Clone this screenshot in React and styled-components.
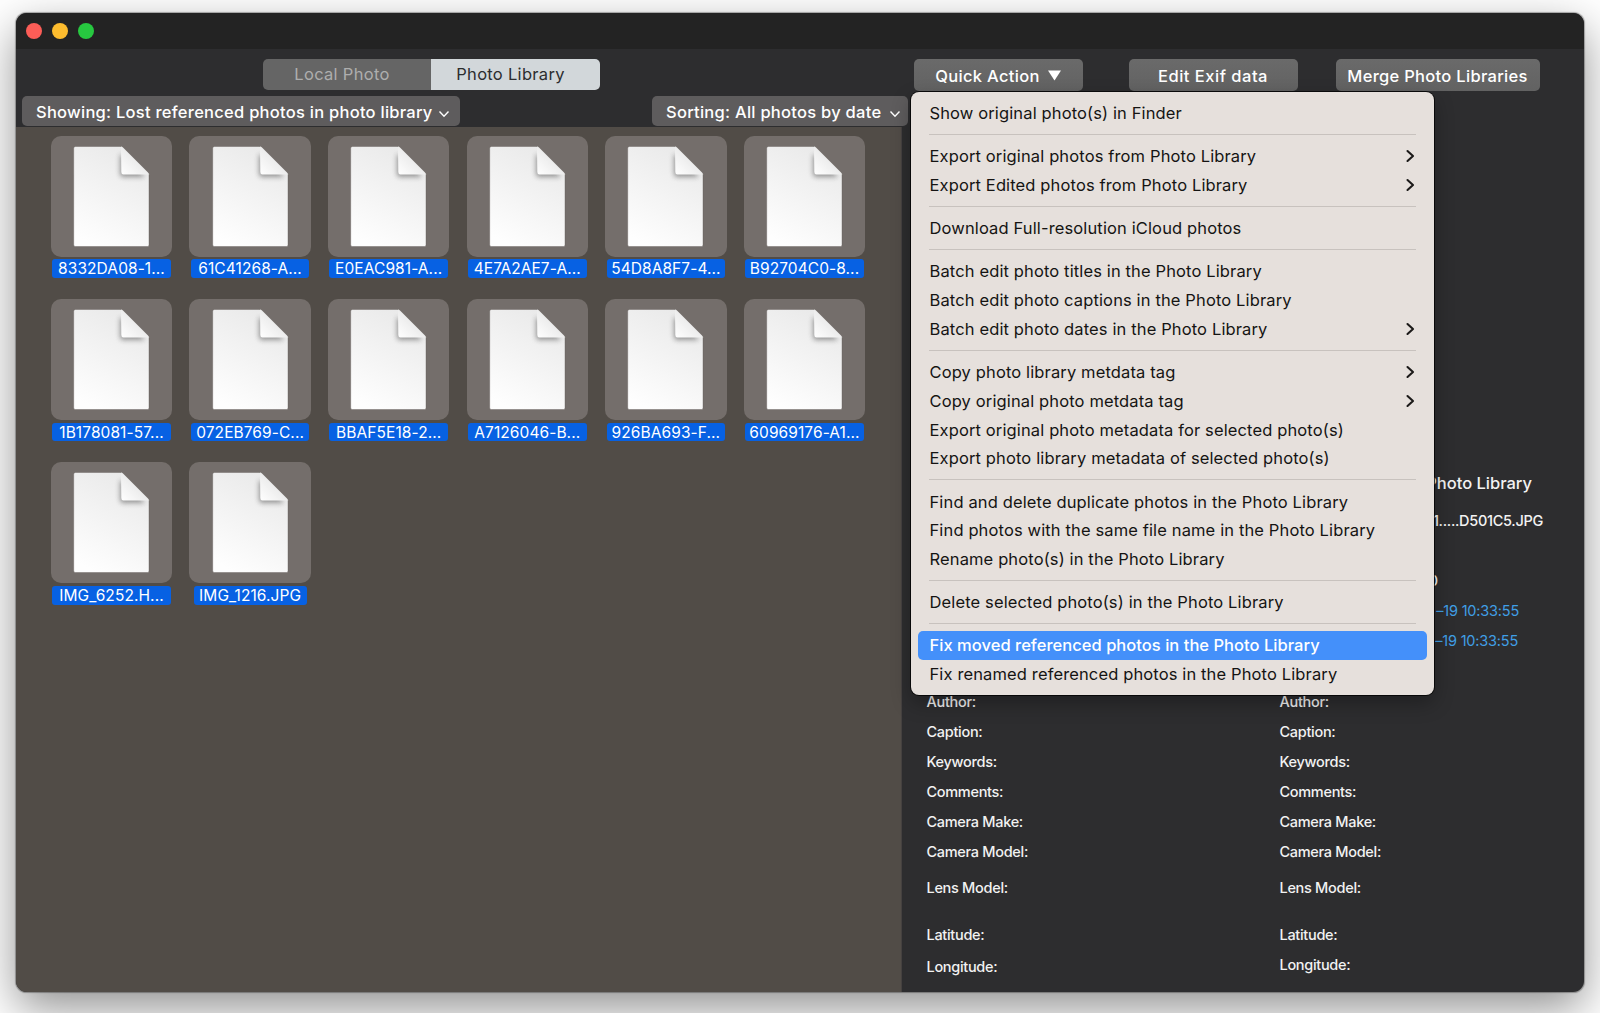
import React from "react"
import styled, { createGlobalStyle } from "styled-components"

const GlobalStyle = createGlobalStyle`
  * {
    box-sizing: border-box;
  }

  body {
    margin: 0;
    background: #fff;
    font-family: Inter, "Liberation Sans", sans-serif;
    overflow: hidden;
  }
`

const Desktop = styled.main`
  width: 1600px;
  height: 1013px;
  padding: 13px 16px 21px;
  overflow: hidden;
`

const Window = styled.section`
  position: relative;
  height: 979px;
  display: flex;
  flex-direction: column;
  border-radius: 11px;
  background: #2d2d2f;
  box-shadow: 0 0 1px 0.5px rgba(0, 0, 0, 0.3), 0 16px 46px rgba(0, 0, 0, 0.44);
`

const TitleBar = styled.header`
  height: 36px;
  padding: 0 10px;
  display: flex;
  align-items: center;
  gap: 10px;
  border-radius: 11px 11px 0 0;
  background: #232323;
`

const Light = styled.span`
  width: 16px;
  height: 16px;
  border-radius: 50%;
  background: ${({ color }) => color};
`

const Toolbar = styled.div`
  height: 78px;
  padding-top: 10px;
`

const ActionRow = styled.div`
  display: flex;
  height: 37px;
  padding-left: 247px;
`

const Segment = styled.button`
  width: ${({ $active }) => ($active ? 169 : 168)}px;
  height: 31px;
  padding: 0 10px 1px 0;
  border: 0;
  font-family: inherit;
  font-size: 16.5px;
  letter-spacing: 0.3px;
  color: ${({ $active }) => ($active ? "#2c2d2f" : "#aeaeae")};
  background: ${({ $active }) => ($active ? "#d2d7da" : "#656565")};
  border-radius: ${({ $active }) => ($active ? "0 5px 5px 0" : "5px 0 0 5px")};
`

const Actions = styled.div`
  display: flex;
  margin-left: 314px;
`

const ActionButton = styled.button`
  display: flex;
  align-items: center;
  justify-content: center;
  gap: 8px;
  width: ${({ $width }) => $width}px;
  height: 32px;
  margin-right: ${({ $after }) => $after || 0}px;
  padding: 1px 1px 0 0;
  border: 0;
  border-radius: 5px;
  background: linear-gradient(#6a6a6a, #626262);
  font-family: inherit;
  font-size: 16.5px;
  font-weight: 500;
  letter-spacing: ${({ $tracking }) => $tracking || 0.3}px;
  color: #fff;
`

const FilterRow = styled.div`
  display: flex;
  padding-left: 6px;
  gap: 192px;
`

const Dropdown = styled.button`
  display: flex;
  align-items: center;
  justify-content: space-between;
  width: ${({ $width }) => $width}px;
  height: 30px;
  padding: 2px ${({ $end }) => $end || 10}px 0 14px;
  border: 0;
  border-radius: 5px;
  background: #5e5c5d;
  font-family: inherit;
  font-size: 16.5px;
  font-weight: 500;
  letter-spacing: 0.26px;
  color: #fff;
`

const Main = styled.div`
  flex: 1;
  display: flex;
`

const Photos = styled.div`
  width: 886px;
  padding: 8.5px 0 0 35px;
  display: grid;
  grid-template-columns: repeat(6, 121px);
  grid-auto-rows: 163.4px;
  column-gap: 17.6px;
  align-content: start;
  background: #514c47;
  border-right: 1px solid #454140;
  border-radius: 0 0 0 11px;
`

const Photo = styled.figure`
  margin: 0;
  display: flex;
  flex-direction: column;
  align-items: center;
`

const Thumb = styled.div`
  width: 121.5px;
  height: 121px;
  padding-top: 10px;
  display: flex;
  justify-content: center;
  border-radius: 10px;
  background: #746e6b;
`

const Name = styled.figcaption`
  height: 18.5px;
  margin-top: 2.8px;
  min-width: ${({ $short }) => ($short ? 113 : 118.5)}px;
  border-radius: 3px;
  background: #0761e3;
  font-size: 15.5px;
  line-height: 19px;
  letter-spacing: 0.08px;
  text-align: center;
  white-space: nowrap;
  color: #fff;
`

const Details = styled.div`
  flex: 1;
  display: grid;
  grid-template-columns: 353px 1fr;
  padding: 341px 0 0 24.5px;
`

const Column = styled.div`
  display: flex;
  flex-direction: column;
`

const Value = styled.div`
  height: 30px;
  line-height: 30px;
  margin-top: ${({ $gap }) => $gap || 0}px;
  padding-right: ${({ $inset }) => $inset}px;
  font-size: ${({ $size }) => $size || 14.5}px;
  font-weight: ${({ $link }) => ($link ? 400 : 500)};
  letter-spacing: ${({ $tracking }) => $tracking || 0}px;
  text-align: right;
  color: ${({ $link }) => ($link ? "#409fe6" : "#f2f2f2")};
`

const Fields = styled.div`
  margin-top: ${({ $top }) => $top}px;
`

const Label = styled.div`
  height: 30px;
  line-height: 30px;
  margin-top: ${({ $gap }) => $gap || 0}px;
  font-size: 14.5px;
  font-weight: 500;
  letter-spacing: -0.3px;
  color: #f2f2f2;
`

// floats over the toolbar's lower edge and the details panel
const Menu = styled.ul`
  position: absolute;
  top: 79px;
  left: 895px;
  width: 523px;
  height: 603px;
  margin: 0;
  padding: 6.5px 7px;
  list-style: none;
  border-radius: 8px;
  background: #e6e0dc;
  box-shadow: 0 0 0 1px rgba(0, 0, 0, 0.75), 0 8px 20px rgba(0, 0, 0, 0.3);
`

const MenuItem = styled.li`
  display: flex;
  align-items: center;
  justify-content: space-between;
  height: 28.8px;
  padding: 0.3px 12px 0 11.5px;
  border-radius: 5px;
  font-size: 16.5px;
  font-weight: ${({ $active }) => ($active ? 500 : 400)};
  letter-spacing: ${({ $active }) => ($active ? 0.03 : 0.13)}px;
  white-space: nowrap;
  color: ${({ $active }) => ($active ? "#fff" : "#151413")};
  background: ${({ $active }) => ($active ? "#4490fa" : "transparent")};
`

const Separator = styled.li`
  height: 14.35px;
  padding: 6.5px 11px 0;

  &::before {
    content: "";
    display: block;
    height: 1px;
    background: #c8c2be;
  }
`

const fileNames = [
  "8332DA08-1...",
  "61C41268-A...",
  "E0EAC981-A...",
  "4E7A2AE7-A...",
  "54D8A8F7-4...",
  "B92704C0-8...",
  "1B178081-57...",
  "072EB769-C...",
  "BBAF5E18-2...",
  "A7126046-B...",
  "926BA693-F...",
  "60969176-A1...",
  "IMG_6252.H...",
  "IMG_1216.JPG",
]

const menuGroups = [
  [{ text: "Show original photo(s) in Finder" }],
  [
    { text: "Export original photos from Photo Library", sub: true },
    { text: "Export Edited photos from Photo Library", sub: true },
  ],
  [{ text: "Download Full-resolution iCloud photos" }],
  [
    { text: "Batch edit photo titles in the Photo Library" },
    { text: "Batch edit photo captions in the Photo Library" },
    { text: "Batch edit photo dates in the Photo Library", sub: true },
  ],
  [
    { text: "Copy photo library metdata tag", sub: true },
    { text: "Copy original photo metdata tag", sub: true },
    { text: "Export original photo metadata for selected photo(s)" },
    { text: "Export photo library metadata of selected photo(s)" },
  ],
  [
    { text: "Find and delete duplicate photos in the Photo Library" },
    { text: "Find photos with the same file name in the Photo Library" },
    { text: "Rename photo(s) in the Photo Library" },
  ],
  [{ text: "Delete selected photo(s) in the Photo Library" }],
  [
    { text: "Fix moved referenced photos in the Photo Library", active: true },
    { text: "Fix renamed referenced photos in the Photo Library" },
  ],
]

const DocumentIcon = () => (
  <svg width="77" height="102" viewBox="0 0 77 102">
    <defs>
      <linearGradient id="paper" x1="0.3" y1="1" x2="0.7" y2="0">
        <stop offset="0" stopColor="#fefefe" />
        <stop offset="1" stopColor="#e9e9e9" />
      </linearGradient>
      <linearGradient id="fold" x1="0" y1="1" x2="0.6" y2="0.4">
        <stop offset="0" stopColor="#ffffff" />
        <stop offset="1" stopColor="#e9e9e9" />
      </linearGradient>
      <filter id="foldShadow" x="-40%" y="-40%" width="180%" height="180%">
        <feGaussianBlur stdDeviation="2.4" />
      </filter>
      <clipPath id="sheet">
        <path d="M3 .5H48L76 28.500V99Q76 100.500 74.500 100.500H2.500Q.7 100.500 .7 99V2Q.7 .5 2.500 .5Z" />
      </clipPath>
    </defs>
    <path
      d="M3 .5H48L76 28.500V99Q76 100.500 74.500 100.500H2.500Q.7 100.500 .7 99V2Q.7 .5 2.500 .5Z"
      fill="url(#paper)"
      stroke="#625c59"
      strokeWidth=".4"
    />
    <g clipPath="url(#sheet)">
      <path
        d="M47 8V27Q47 31 50 31H72L60 16Z"
        fill="#666"
        opacity=".65"
        filter="url(#foldShadow)"
      />
    </g>
    <path d="M48 .5Q49 .5 50 1.500L75 26.500Q76 27.500 76 28.500H50.500Q48.300 28.500 48.300 26Z" fill="url(#fold)" />
  </svg>
)

const ChevronDown = () => (
  <svg width="12" height="8" viewBox="0 0 12 8" style={{ marginTop: 3 }}>
    <path d="M1.500 1.500 6 6.200 10.500 1.500" fill="none" stroke="#fff" strokeWidth="1.400" />
  </svg>
)

const ChevronRight = () => (
  <svg width="9" height="14" viewBox="0 0 9 14">
    <path
      d="M1.500 2 7 7 1.500 12"
      fill="none"
      stroke="#1c1a19"
      strokeWidth="2.100"
      strokeLinecap="round"
      strokeLinejoin="round"
    />
  </svg>
)

const FieldList = ({ top, last }) => (
  <Fields $top={top}>
    <Label>Author:</Label>
    <Label>Caption:</Label>
    <Label>Keywords:</Label>
    <Label>Comments:</Label>
    <Label>Camera Make:</Label>
    <Label>Camera Model:</Label>
    <Label $gap={6.5}>Lens Model:</Label>
    <Label $gap={17}>Latitude:</Label>
    <Label $gap={last}>Longitude:</Label>
  </Fields>
)

const ActionMenu = () => (
  <Menu>
    {menuGroups.map((group, i) => (
      <React.Fragment key={i}>
        {i > 0 && <Separator />}
        {group.map(item => (
          <MenuItem key={item.text} $active={item.active}>
            <span>{item.text}</span>
            {item.sub && <ChevronRight />}
          </MenuItem>
        ))}
      </React.Fragment>
    ))}
  </Menu>
)

const App = () => {
  return (
    <Desktop>
      <GlobalStyle />
      <Window>
        <TitleBar>
          <Light color="#fc5d57" />
          <Light color="#fdbc2e" />
          <Light color="#27c840" />
        </TitleBar>
        <Toolbar>
          <ActionRow>
            <Segment>Local Photo</Segment>
            <Segment $active>Photo Library</Segment>
            <Actions>
              <ActionButton $width={169} $after={46}>
                Quick Action
                <svg width="13" height="11" viewBox="0 0 13 11">
                  <path d="M0 .5H13L6.500 10.500Z" fill="#fff" />
                </svg>
              </ActionButton>
              <ActionButton $width={169} $after={38} $tracking={0.5}>
                Edit Exif data
              </ActionButton>
              <ActionButton $width={204}>Merge Photo Libraries</ActionButton>
            </Actions>
          </ActionRow>
          <FilterRow>
            <Dropdown $width={438}>
              <span>Showing: Lost referenced photos in photo library</span>
              <ChevronDown />
            </Dropdown>
            <Dropdown $width={256} $end={7.5}>
              <span>Sorting: All photos by date</span>
              <ChevronDown />
            </Dropdown>
          </FilterRow>
        </Toolbar>
        <Main>
          <Photos>
            {fileNames.map(name => (
              <Photo key={name}>
                <Thumb>
                  <DocumentIcon />
                </Thumb>
                <Name $short={name.endsWith("JPG")}>{name}</Name>
              </Photo>
            ))}
          </Photos>
          <Details>
            <Column>
              <FieldList top={218.5} last={1.5} />
            </Column>
            <Column>
              <Value $inset={52} $size={16.5}>Photo Library</Value>
              <Value $inset={41} $gap={8} $tracking={-0.3}>1.....D501C5.JPG</Value>
              <Value $inset={146} $gap={30}>0</Value>
              <Value $inset={65} $link $tracking={-0.2}>–19 10:33:55</Value>
              <Value $inset={66} $link $tracking={-0.2}>–19 10:33:55</Value>
              <FieldList top={30.5} last={0} />
            </Column>
          </Details>
        </Main>
        <ActionMenu />
      </Window>
    </Desktop>
  )
}

export default App
